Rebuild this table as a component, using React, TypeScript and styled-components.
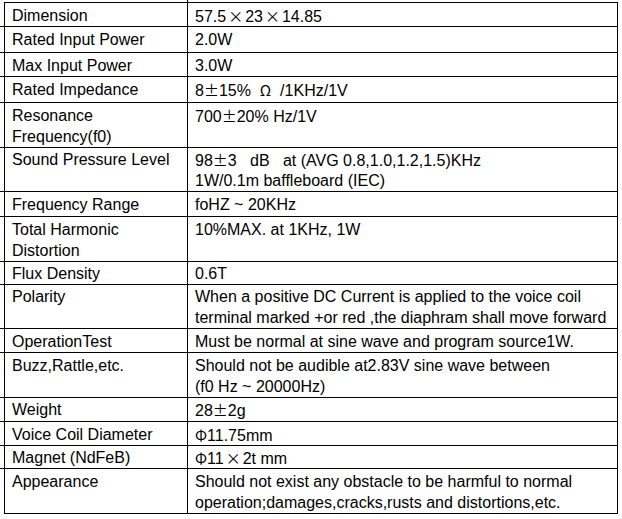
import React from 'react';
import styled, { createGlobalStyle } from 'styled-components';

const GlobalStyle = createGlobalStyle`
  html, body {
    margin: 0;
    padding: 0;
    background: #ffffff;
  }
  body {
    font-family: "Liberation Sans", Arial, sans-serif;
    color: #000000;
  }
`;

type Spec = {
    label: string[];
    value: React.ReactNode[];
    h: number;
};

const Sym = styled.span<{ gap?: number }>`
    font-family: "Noto Sans CJK SC", "Liberation Sans", sans-serif;
    font-size: 15px;
    margin: 0 ${({ gap }) => gap || 0}px;
`;

const specs: Spec[] = [
    { label: ['Dimension'], h: 24, value: [<>57.5<Sym gap={2}>×</Sym>23<Sym gap={2}>×</Sym>14.85</>] },
    { label: ['Rated Input Power'], h: 26, value: ['2.0W'] },
    { label: ['Max Input Power'], h: 24, value: ['3.0W'] },
    { label: ['Rated Impedance'], h: 26, value: [<>8<Sym>±</Sym>15%&nbsp;&nbsp;<Sym>Ω</Sym>&nbsp;&nbsp;/1KHz/1V</>] },
    { label: ['Resonance', 'Frequency(f0)'], h: 44, value: [<>700<Sym>±</Sym>20% Hz/1V</>] },
    {
        label: ['Sound Pressure Level'],
        h: 45,
        value: [<>98<Sym>±</Sym>3&nbsp;&nbsp;&nbsp;dB&nbsp;&nbsp;&nbsp;at (AVG 0.8,1.0,1.2,1.5)KHz</>, '1W/0.1m baffleboard (IEC)'],
    },
    { label: ['Frequency Range'], h: 25, value: ['foHZ ~ 20KHz'] },
    { label: ['Total Harmonic', 'Distortion'], h: 44, value: ['10%MAX. at 1KHz, 1W'] },
    { label: ['Flux Density'], h: 23, value: ['0.6T'] },
    {
        label: ['Polarity'],
        h: 45,
        value: [
            'When a positive DC Current is applied to the voice coil',
            'terminal marked +or red ,the diaphram shall move forward',
        ],
    },
    { label: ['OperationTest'], h: 24, value: ['Must be normal at sine wave and program source1W.'] },
    {
        label: ['Buzz,Rattle,etc.'],
        h: 44,
        value: ['Should not be audible at2.83V sine wave between', '(f0 Hz ~ 20000Hz)'],
    },
    { label: ['Weight'], h: 25, value: [<>28<Sym>±</Sym>2g</>] },
    { label: ['Voice Coil Diameter'], h: 23, value: [<><Sym>Φ</Sym>11.75mm</>] },
    { label: ['Magnet (NdFeB)'], h: 24, value: [<><Sym>Φ</Sym>11<Sym gap={2}>×</Sym>2t mm</>] },
    {
        label: ['Appearance'],
        h: 44,
        value: [
            'Should not exist any obstacle to be harmful to normal',
            'operation;damages,cracks,rusts and distortions,etc.',
        ],
    },
];

const App = () => {
    return (
        <>
            <GlobalStyle />
            <Page>
                <TopStub />
                <SpecTable>
                    {specs.map((spec, i) => {
                        const last = i === specs.length - 1;
                        return (
                            <Row key={spec.label.join(' ')} h={spec.h}>
                                <Gutter last={last} />
                                <LabelCell>
                                    {spec.label.map((line) => (
                                        <Line key={line}>{line}</Line>
                                    ))}
                                </LabelCell>
                                <ValueCell>
                                    {spec.value.map((line, j) => (
                                        <Line key={j}>{line}</Line>
                                    ))}
                                </ValueCell>
                            </Row>
                        );
                    })}
                </SpecTable>
            </Page>
        </>
    );
};

export default App;

const Page = styled.div`
    width: 622px;
    height: 519px;
    overflow: hidden;
`;

const TopStub = styled.div`
    width: 1px;
    height: 3px;
    margin-left: 187px;
    background: #000;
`;

const SpecTable = styled.div`
    width: 618px;
    display: flex;
    flex-direction: column;
`;

const Row = styled.div<{ h: number }>`
    display: grid;
    grid-template-columns: 4px 184px 430px;
    height: ${({ h }) => h}px;
    box-sizing: border-box;
    &:first-child > div:not(:first-child) {
        border-top: 1px solid #000;
        margin-top: -1px;
    }
`;

const Gutter = styled.div<{ last: boolean }>`
    border-bottom: ${({ last }) => (last ? 'none' : '1px solid #000')};
`;

const Cell = styled.div`
    box-sizing: border-box;
    padding: 2px 0 0 7px;
    border-bottom: 1px solid #000;
    border-right: 1px solid #000;
    font-size: 16px;
    line-height: 21px;
    white-space: nowrap;
`;

const LabelCell = styled(Cell)`
    border-left: 1px solid #000;
`;

const ValueCell = styled(Cell)``;

const Line = styled.div`
    height: 21px;
`;
